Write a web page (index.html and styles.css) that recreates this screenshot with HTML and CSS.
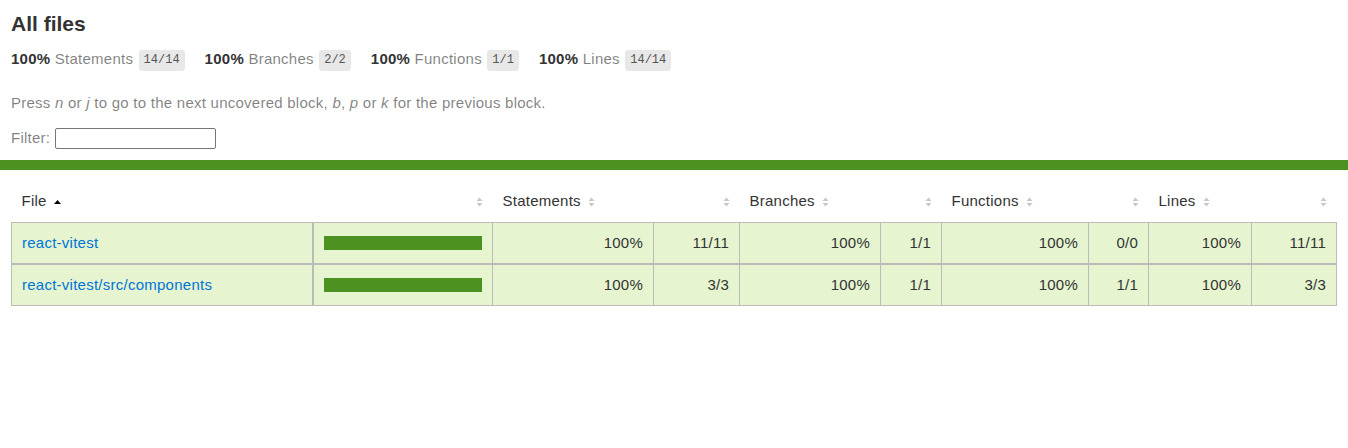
FILE: index.html
```html
<!DOCTYPE html>
<html lang="en">
<head>
<meta charset="utf-8">
<title>Code coverage report for All files</title>
<link rel="stylesheet" href="styles.css">
</head>
<body>
<div class="wrapper">
  <div class="pad1">
    <h1>All files</h1>
    <div class="clearfix">
      <div class="fl pad1y space-right2">
        <span class="strong">100% </span>
        <span class="quiet">Statements</span>
        <span class="fraction">14/14</span>
      </div>
      <div class="fl pad1y space-right2">
        <span class="strong">100% </span>
        <span class="quiet">Branches</span>
        <span class="fraction">2/2</span>
      </div>
      <div class="fl pad1y space-right2">
        <span class="strong">100% </span>
        <span class="quiet">Functions</span>
        <span class="fraction">1/1</span>
      </div>
      <div class="fl pad1y space-right2">
        <span class="strong">100% </span>
        <span class="quiet">Lines</span>
        <span class="fraction">14/14</span>
      </div>
    </div>
    <p class="quiet">Press <em>n</em> or <em>j</em> to go to the next uncovered block, <em>b</em>, <em>p</em> or <em>k</em> for the previous block.</p>
    <div class="quiet filter">Filter: <input type="search" class="file-search"></div>
  </div>
  <div class="status-line high"></div>
  <div class="table-wrap">
    <table class="coverage-summary">
      <colgroup>
        <col class="c-file"><col class="c-pic"><col class="c-spct"><col class="c-sabs"><col class="c-bpct"><col class="c-babs"><col class="c-fpct"><col class="c-fabs"><col class="c-lpct"><col class="c-labs">
      </colgroup>
      <thead>
        <tr>
          <th class="file sorted">File<span class="sorter sorter-up"><svg width="7" height="10" viewBox="0 0 7 10"><path d="M0 7 L3.5 3 L7 7 Z" fill="#000"/></svg></span></th>
          <th class="pic"><span class="sorter"><svg width="7" height="10" viewBox="0 0 7 10"><path d="M0.5 4 L3.5 0.5 L6.5 4 Z M0.5 6 L3.5 9.5 L6.5 6 Z" fill="#c8c8c8"/></svg></span></th>
          <th class="pct">Statements<span class="sorter"><svg width="7" height="10" viewBox="0 0 7 10"><path d="M0.5 4 L3.5 0.5 L6.5 4 Z M0.5 6 L3.5 9.5 L6.5 6 Z" fill="#c8c8c8"/></svg></span></th>
          <th class="abs"><span class="sorter"><svg width="7" height="10" viewBox="0 0 7 10"><path d="M0.5 4 L3.5 0.5 L6.5 4 Z M0.5 6 L3.5 9.5 L6.5 6 Z" fill="#c8c8c8"/></svg></span></th>
          <th class="pct">Branches<span class="sorter"><svg width="7" height="10" viewBox="0 0 7 10"><path d="M0.5 4 L3.5 0.5 L6.5 4 Z M0.5 6 L3.5 9.5 L6.5 6 Z" fill="#c8c8c8"/></svg></span></th>
          <th class="abs"><span class="sorter"><svg width="7" height="10" viewBox="0 0 7 10"><path d="M0.5 4 L3.5 0.5 L6.5 4 Z M0.5 6 L3.5 9.5 L6.5 6 Z" fill="#c8c8c8"/></svg></span></th>
          <th class="pct">Functions<span class="sorter"><svg width="7" height="10" viewBox="0 0 7 10"><path d="M0.5 4 L3.5 0.5 L6.5 4 Z M0.5 6 L3.5 9.5 L6.5 6 Z" fill="#c8c8c8"/></svg></span></th>
          <th class="abs"><span class="sorter"><svg width="7" height="10" viewBox="0 0 7 10"><path d="M0.5 4 L3.5 0.5 L6.5 4 Z M0.5 6 L3.5 9.5 L6.5 6 Z" fill="#c8c8c8"/></svg></span></th>
          <th class="pct">Lines<span class="sorter"><svg width="7" height="10" viewBox="0 0 7 10"><path d="M0.5 4 L3.5 0.5 L6.5 4 Z M0.5 6 L3.5 9.5 L6.5 6 Z" fill="#c8c8c8"/></svg></span></th>
          <th class="abs"><span class="sorter"><svg width="7" height="10" viewBox="0 0 7 10"><path d="M0.5 4 L3.5 0.5 L6.5 4 Z M0.5 6 L3.5 9.5 L6.5 6 Z" fill="#c8c8c8"/></svg></span></th>
        </tr>
      </thead>
      <tbody>
        <tr>
          <td class="file high"><a href="#">react-vitest</a></td>
          <td class="pic high"><div class="chart"><div class="cover-fill cover-full"></div></div></td>
          <td class="pct high">100%</td>
          <td class="abs high">11/11</td>
          <td class="pct high">100%</td>
          <td class="abs high">1/1</td>
          <td class="pct high">100%</td>
          <td class="abs high">0/0</td>
          <td class="pct high">100%</td>
          <td class="abs high">11/11</td>
        </tr>
        <tr>
          <td class="file high"><a href="#">react-vitest/src/components</a></td>
          <td class="pic high"><div class="chart"><div class="cover-fill cover-full"></div></div></td>
          <td class="pct high">100%</td>
          <td class="abs high">3/3</td>
          <td class="pct high">100%</td>
          <td class="abs high">1/1</td>
          <td class="pct high">100%</td>
          <td class="abs high">1/1</td>
          <td class="pct high">100%</td>
          <td class="abs high">3/3</td>
        </tr>
      </tbody>
    </table>
  </div>
</div>
</body>
</html>
```

FILE: styles.css
```css
html, body { margin: 0; padding: 0; height: 100%; }
body {
  font-family: "Helvetica Neue", Helvetica, Arial, "Liberation Sans", sans-serif;
  font-size: 15px;
  letter-spacing: 0.25px;
  color: #333;
  background: #fff;
}
*, *:after, *:before { box-sizing: border-box; }
h1 { font-size: 21px; margin: 0; line-height: 28px; letter-spacing: 0; padding-left: 1px; }
a { color: #0074D9; text-decoration: none; }
.strong { font-weight: bold; }
.pad1 { padding: 10px; }
.pad1y { padding: 10px 0; }
.space-right2 { padding-right: 20px; }
.clearfix { display: flex; padding-left: 1px; }
.clearfix .fl { line-height: 21px; }
.quiet { color: rgba(0,0,0,0.5); }
.fraction {
  display: inline-block;
  font-family: Consolas, "Liberation Mono", Menlo, Courier, monospace;
  font-size: 12px;
  letter-spacing: 0;
  line-height: 13px;
  color: #555;
  background: #E8E8E8;
  padding: 4px 5px;
  border-radius: 3px;
  vertical-align: middle;
  margin-left: 1px;
}
p.quiet { margin: 13px 0; line-height: 18px; padding-left: 1px; }
.filter { margin: 0; line-height: 25px; padding-left: 1px; }
.file-search {
  width: 161px;
  height: 21px;
  border: 1px solid #767676;
  border-radius: 2px;
  vertical-align: middle;
  margin: 0;
  padding: 1px 2px;
  background: #fff;
}
.status-line { height: 10px; }
.status-line.high { background: rgb(77,146,33); }

.table-wrap { padding: 10px 12px 10px 11px; }
.coverage-summary {
  border-collapse: collapse;
  width: 100%;
  table-layout: fixed;
}
.c-file { width: 301px; }
.c-pic { width: 180px; }
.c-spct { width: 161px; }
.c-sabs { width: 86px; }
.c-bpct { width: 141px; }
.c-babs { width: 61px; }
.c-fpct { width: 147px; }
.c-fabs { width: 60px; }
.c-lpct { width: 103px; }
.c-labs { width: 85px; }
.coverage-summary tr { border-bottom: 1px solid #bbb; }
.coverage-summary thead tr { border-bottom: none; }
.coverage-summary tbody { border: 1px solid #bbb; }
.coverage-summary tbody tr + tr { border-top: 2px solid #bbb; }
.coverage-summary td, .coverage-summary th { padding: 10px; line-height: 20px; }
.coverage-summary th { line-height: 22px; }
.coverage-summary td { border-right: 1px solid #bbb; }
.coverage-summary td:last-child { border-right: none; }
.coverage-summary td.file { border-right: 2px solid #bbb; }
.coverage-summary th {
  text-align: left;
  font-weight: normal;
  white-space: nowrap;
}
.coverage-summary th.pic,
.coverage-summary th.abs,
.coverage-summary td.pct,
.coverage-summary td.abs { text-align: right; }
.coverage-summary td.file { white-space: nowrap; }
.sorter {
  display: inline-block;
  width: 7px;
  height: 10px;
  margin-left: 0.5em;
  vertical-align: -1px;
  line-height: 0;
}
.sorter svg { display: block; }
.high { background: rgb(230,245,208); }
.chart { line-height: 0; border: 1px solid rgb(77,146,33); }
.cover-fill { display: block; height: 12px; width: 100%; background: rgb(77,146,33); }
```
